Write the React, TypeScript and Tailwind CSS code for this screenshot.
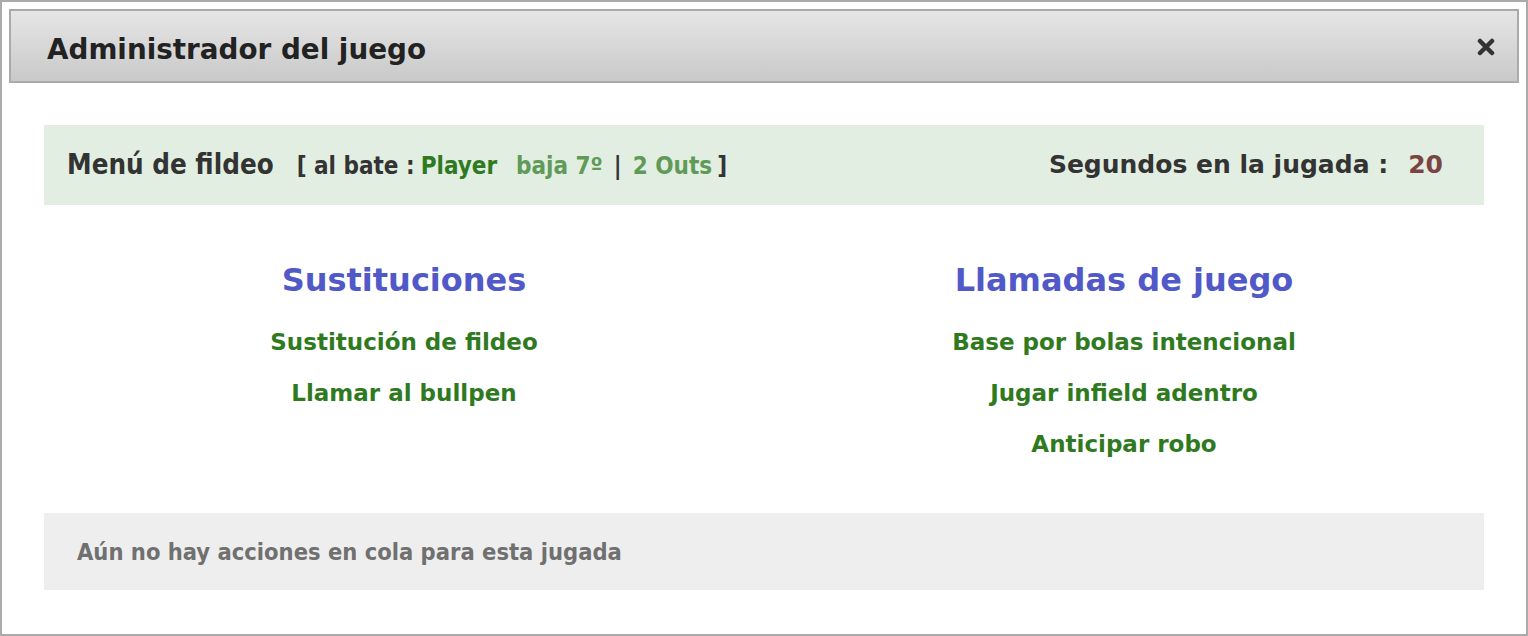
import React from 'react';

export default function App() {
  const subs = ['Sustitución de fildeo', 'Llamar al bullpen'];
  const calls = ['Base por bolas intencional', 'Jugar infield adentro', 'Anticipar robo'];

  return (
    <div className="w-[1528px] h-[636px] bg-white border-2 border-[#aaaaaa] p-[7px] font-['DejaVu_Sans',sans-serif]">
      {/* Title bar */}
      <div className="h-[74px] border-2 border-[#aaaaaa] bg-gradient-to-b from-[#e6e6e6] to-[#c9c9c9] flex items-center justify-between pl-[36px] pr-[22px]">
        <h1 className="text-[27.8px] font-bold text-[#222222] leading-none mt-[8px]">Administrador del juego</h1>
        <svg width="18" height="18" viewBox="0 0 18 18" className="mt-[1px]">
          <path d="M3 3 L15 15 M15 3 L3 15" stroke="#333333" strokeWidth="4.5" strokeLinecap="round" />
        </svg>
      </div>

      <div className="px-[35px] pt-[42px]">
        {/* Fielding menu bar */}
        <div className="h-[80px] bg-[#e1eee1] flex items-center justify-between pl-[23px] pr-[41px]">
          <div className="flex items-baseline font-['DejaVu_Sans_Condensed',sans-serif] font-bold">
            <span className="text-[27.5px] text-[#333333]">Menú de fildeo</span>
            <span className="text-[24px] text-[#333333] ml-[23px]">[ al bate :</span>
            <span className="text-[24px] text-[#2f7a1f] ml-[6px]">Player</span>
            <span className="text-[24px] text-[#5f9a58] ml-[19px]">baja 7º</span>
            <span className="text-[24px] text-[#333333] ml-[11px]">|</span>
            <span className="text-[24px] text-[#5f9a58] ml-[11px]">2 Outs</span>
            <span className="text-[24px] text-[#333333] ml-[5px]">]</span>
          </div>
          <div className="flex items-baseline font-bold">
            <span className="text-[25px] text-[#333333]">Segundos en la jugada :</span>
            <span className="text-[25px] text-[#7b4443] ml-[20px]">20</span>
          </div>
        </div>

        {/* Columns */}
        <div className="grid grid-cols-2 pt-[54px] h-[308px]">
          <div className="flex flex-col items-center">
            <h2 className="text-[32px] leading-[42px] font-bold text-[#5158c8]">Sustituciones</h2>
            <div className="mt-[16px] flex flex-col items-center">
              {subs.map((s) => (
                <a key={s} className="text-[23px] leading-[51px] font-bold text-[#2f7a1f]">{s}</a>
              ))}
            </div>
          </div>
          <div className="flex flex-col items-center">
            <h2 className="text-[32px] leading-[42px] font-bold text-[#5158c8]">Llamadas de juego</h2>
            <div className="mt-[16px] flex flex-col items-center">
              {calls.map((s) => (
                <a key={s} className="text-[23px] leading-[51px] font-bold text-[#2f7a1f]">{s}</a>
              ))}
            </div>
          </div>
        </div>

        {/* Queue */}
        <div className="h-[77px] bg-[#eeeeee] flex items-center pl-[33px]">
          <span className="font-['DejaVu_Sans_Condensed',sans-serif] font-bold text-[23.5px] text-[#707070] mt-[2px]">
            Aún no hay acciones en cola para esta jugada
          </span>
        </div>
      </div>
    </div>
  );
}
